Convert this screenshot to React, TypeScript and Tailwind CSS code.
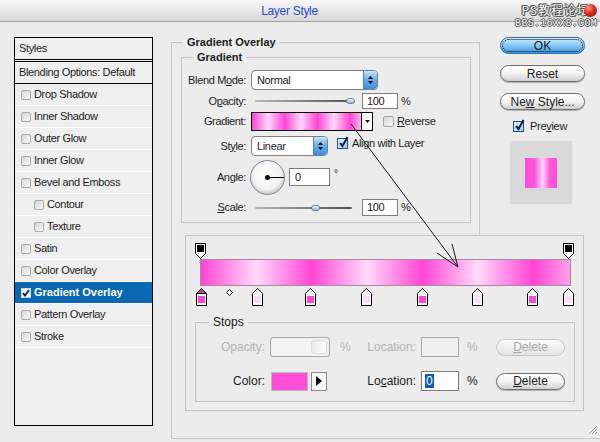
import React from "react";

function U({ children }: { children: React.ReactNode }) {
  return <span className="underline underline-offset-[1px] decoration-1">{children}</span>;
}

function GreyBox() {
  return (
    <span className="block w-[10px] h-[10px] shrink-0 rounded-[2px] border border-[#a9a9a9] bg-linear-to-br from-[#d6d6d6] to-[#fafafa]" />
  );
}

function BlueCheck() {
  return (
    <span className="relative block w-[11px] h-[11px] shrink-0 border border-[#1f4f8a] bg-linear-to-br from-[#e6f2fc] to-[#a8cbea]">
      <svg className="absolute left-[0px] top-[-3px]" width="11" height="13" viewBox="0 0 11 13">
        <path d="M2 7 L4.5 10 L9.5 1" stroke="#0d1f4d" strokeWidth="2" fill="none" />
      </svg>
    </span>
  );
}

function Spinner() {
  return (
    <span className="ml-auto w-[14px] h-[18px] rounded-r-[3px] border-l border-[#4d82c2] bg-linear-to-b from-[#c9e5fc] via-[#62acef] to-[#3a8ee3] flex flex-col items-center justify-center gap-[2px]">
      <svg width="5" height="3" viewBox="0 0 5 3">
        <path d="M0 3 L2.5 0 L5 3 Z" fill="#000" />
      </svg>
      <svg width="5" height="3" viewBox="0 0 5 3">
        <path d="M0 0 L2.5 3 L5 0 Z" fill="#000" />
      </svg>
    </span>
  );
}

const styleItems: { label: string; indent?: boolean; selected?: boolean }[] = [
  { label: "Drop Shadow" },
  { label: "Inner Shadow" },
  { label: "Outer Glow" },
  { label: "Inner Glow" },
  { label: "Bevel and Emboss" },
  { label: "Contour", indent: true },
  { label: "Texture", indent: true },
  { label: "Satin" },
  { label: "Color Overlay" },
  { label: "Gradient Overlay", selected: true },
  { label: "Pattern Overlay" },
  { label: "Stroke" },
];

function ColorStop({ pos, color, selected }: { pos: string; color: string; selected?: boolean }) {
  return (
    <svg className={`absolute top-[2px] ${pos}`} width="11" height="18" viewBox="0 0 11 18">
      <path d="M5.5 0.5 L10.5 5.5 L10.5 17.5 L0.5 17.5 L0.5 5.5 Z" fill="#fff" stroke="#000" strokeWidth="1" />
      {selected && <path d="M5.5 0.5 L10.5 5.5 L0.5 5.5 Z" fill="#c83aa8" stroke="#000" strokeWidth="1" />}
      <rect x="2.5" y="8.5" width="6" height="6" fill={color} stroke={color} strokeWidth="1" />
    </svg>
  );
}

function OpacityStop({ pos }: { pos: string }) {
  return (
    <svg className={`absolute top-0 ${pos}`} width="11" height="16" viewBox="0 0 11 16">
      <path d="M0.5 0.5 L10.5 0.5 L10.5 10.5 L5.5 15.5 L0.5 10.5 Z" fill="#fff" stroke="#000" strokeWidth="1" />
      <rect x="2" y="2" width="7" height="7" fill="#000" />
    </svg>
  );
}

export default function App() {
  return (
    <div className="relative w-[600px] h-[442px] overflow-hidden bg-[#ececec] font-['Liberation_Sans',Arial,sans-serif] text-[11px] text-[#1c1c1c]">
      {/* Title bar */}
      <div className="h-[22px] border-b border-[#a3a3a3] bg-linear-to-b from-[#f8f8f8] to-[#d8d8d8] flex items-center justify-center pr-[21px]">
        <span className="text-[12px] tracking-[-0.3px] text-[#2b49cf]">Layer Style</span>
      </div>

      {/* Body */}
      <div className="flex pl-[14px]">
        {/* Styles list */}
        <div className="mt-[15px] w-[139px] h-[389px] border border-black bg-[#efefef] tracking-[-0.35px]">
          <div className="h-[24px] border-b-[3px] border-double border-black flex items-center pl-[4px]">Styles</div>
          <div className="h-[22px] border-b border-black flex items-center pl-[4px]">Blending Options: Default</div>
          {styleItems.map((it) => (
            <div
              key={it.label}
              className={`h-[22px] border-b border-white flex items-center gap-[3px] ${it.indent ? "pl-[19px]" : "pl-[6px]"} ${
                it.selected ? "bg-[#0b69b3] text-white font-bold tracking-[0px]" : ""
              }`}
            >
              {it.selected ? (
                <span className="relative block w-[10px] h-[10px] shrink-0 bg-white border border-[#c9d9ea]">
                  <svg className="absolute left-0 top-0" width="8" height="8" viewBox="0 0 8 8">
                    <path d="M1 4 L3 6.5 L7 1" stroke="#0a2a66" strokeWidth="2" fill="none" />
                  </svg>
                </span>
              ) : (
                <GreyBox />
              )}
              <span>{it.label}</span>
            </div>
          ))}
        </div>

        {/* Right part */}
        <div className="ml-[18px] mt-[13px] flex-1 flex flex-col">
          {/* Row A */}
          <div className="flex h-[200px]">
            <fieldset className="w-[309px] h-[200px] border border-b-0 border-[#c4c4c4] pl-[9px]">
              <legend className="ml-[2px] px-[4px] leading-[14px] font-bold">Gradient Overlay</legend>
              <fieldset className="mt-[1px] w-[290px] h-[173px] border border-[#c4c4c4] tracking-[-0.35px]">
                <legend className="ml-[11px] px-[4px] leading-[14px] font-bold tracking-[0px]">Gradient</legend>
                <div className="flex flex-col pt-[6px]">
                  {/* Blend mode */}
                  <div className="h-[20px] flex items-center">
                    <span className="w-[64px] text-right">
                      Blend M<U>o</U>de:
                    </span>
                    <div className="ml-[5px] w-[127px] h-[20px] rounded-[4px] border border-[#808080] bg-white flex items-center overflow-hidden">
                      <span className="pl-[5px]">Normal</span>
                      <Spinner />
                    </div>
                  </div>
                  {/* Opacity */}
                  <div className="h-[22px] flex items-center">
                    <span className="w-[64px] text-right">
                      O<U>p</U>acity:
                    </span>
                    <div className="relative ml-[9px] w-[100px] h-[8px] flex items-center">
                      <div className="w-full h-[2px] rounded-full bg-linear-to-r from-[#b8b8b8] to-[#505050]" />
                      <div className="absolute left-[91px] top-[1px] w-[9px] h-[6px] rounded-full border border-[#6d86a3] bg-linear-to-b from-[#eef5fc] to-[#97b4d3]" />
                    </div>
                    <div className="ml-[7px] w-[36px] h-[16px] border border-[#7d7d7d] bg-white pl-[4px] leading-[14px]">100</div>
                    <span className="ml-[3px]">%</span>
                  </div>
                  {/* Gradient */}
                  <div className="h-[19px] flex items-center">
                    <span className="w-[64px] text-right">Gradient:</span>
                    <div className="ml-[5px] w-[111px] h-[19px] border border-black bg-[linear-gradient(to_right,#ff45d6_0%,#ffd6fb_15%,#ff45d6_30%,#ffd6fb_45%,#ff45d6_60%,#ffd6fb_75%,#ff45d6_90%,#ffb5ee_100%)]" />
                    <div className="w-[11px] h-[19px] border border-l-0 border-black bg-white flex items-center justify-center">
                      <svg width="5" height="3" viewBox="0 0 5 3">
                        <path d="M0 0 L2.5 3 L5 0 Z" fill="#000" />
                      </svg>
                    </div>
                    <span className="ml-[10px] block w-[11px] h-[11px] rounded-[2px] border border-[#a3a3a3] bg-linear-to-br from-[#d6d6d6] to-[#fafafa]" />
                    <span className="ml-[3px]">
                      <U>R</U>everse
                    </span>
                  </div>
                  {/* Style */}
                  <div className="h-[30px] flex items-center">
                    <span className="w-[64px] text-right">
                      St<U>y</U>le:
                    </span>
                    <div className="ml-[5px] w-[77px] h-[20px] rounded-[4px] border border-[#808080] bg-white flex items-center overflow-hidden">
                      <span className="pl-[5px]">Linear</span>
                      <Spinner />
                    </div>
                    <div className="ml-[9px] -mt-[6px] flex items-center">
                      <BlueCheck />
                      <span className="ml-[4px]">
                        Ali<U>g</U>n with Layer
                      </span>
                    </div>
                  </div>
                  {/* Angle */}
                  <div className="h-[32px] flex items-center">
                    <span className="w-[64px] text-right">
                      An<U>g</U>le:
                    </span>
                    <div className="relative ml-[4px] w-[35px] h-[35px] rounded-full border border-[#7c8898] bg-[radial-gradient(circle_at_45%_40%,#ffffff_0%,#f2f2f2_55%,#cfcfcf_100%)] shadow-[inset_0_-2px_3px_rgba(0,0,0,0.12)]">
                      <div className="absolute left-[16px] top-[16px] w-[17px] h-[1px] bg-black" />
                      <div className="absolute left-[14px] top-[14px] w-[5px] h-[5px] rounded-full bg-black" />
                    </div>
                    <div className="ml-[4px] w-[41px] h-[18px] border border-[#7d7d7d] bg-white pl-[5px] leading-[16px]">0</div>
                    <span className="ml-[4px] -mt-[8px] text-[10px]">°</span>
                  </div>
                  {/* Scale */}
                  <div className="h-[29px] flex items-center">
                    <span className="w-[64px] text-right">
                      <U>S</U>cale:
                    </span>
                    <div className="relative ml-[9px] w-[97px] h-[8px] flex items-center">
                      <div className="w-full h-[2px] rounded-full bg-linear-to-r from-[#b8b8b8] to-[#505050]" />
                      <div className="absolute left-[56px] top-[1px] w-[9px] h-[6px] rounded-full border border-[#6d86a3] bg-linear-to-b from-[#eef5fc] to-[#97b4d3]" />
                    </div>
                    <div className="ml-[10px] w-[36px] h-[17px] border border-[#7d7d7d] bg-white pl-[4px] leading-[15px]">100</div>
                    <span className="ml-[3px]">%</span>
                  </div>
                </div>
              </fieldset>
            </fieldset>

            {/* Buttons column */}
            <div className="ml-[20px] mt-[2px] w-[85px] flex flex-col text-[12px]">
              <div className="h-[17px] rounded-full border border-[#2f6aa6] bg-linear-to-b from-[#d3ecfd] via-[#86c8f6] to-[#3b98e4] flex items-center justify-center outline-1 outline-dotted outline-black outline-offset-[-3px]">
                OK
              </div>
              <div className="mt-[11px] h-[17px] rounded-full border border-[#6e6e6e] bg-linear-to-b from-white via-[#f4f4f4] to-[#cfcfcf] shadow-[0_1px_1px_rgba(0,0,0,0.25)] flex items-center justify-center">
                Reset
              </div>
              <div className="mt-[11px] h-[17px] rounded-full border border-[#6e6e6e] bg-linear-to-b from-white via-[#f4f4f4] to-[#cfcfcf] shadow-[0_1px_1px_rgba(0,0,0,0.25)] flex items-center justify-center">
                Ne<U>w</U>&nbsp;Style...
              </div>
              <div className="mt-[10px] h-[12px] flex items-center text-[11px] tracking-[-0.3px]">
                <span className="ml-[13px]">
                  <BlueCheck />
                </span>
                <span className="ml-[6px]">
                  Pre<U>v</U>iew
                </span>
              </div>
              <div className="ml-[9px] mt-[8px] w-[64px] h-[65px] bg-[#d9d9d9] border border-[#e8e8e8] flex items-center justify-center">
                <div className="w-[32px] h-[30px] bg-[linear-gradient(to_right,#ff4bd7_0%,#ff56d9_30%,#ffd3fa_55%,#ff56d9_78%,#ff4bd7_100%)]" />
              </div>
            </div>
          </div>

          {/* Row B: gradient editor */}
          <div className="h-[204px] border-l border-b border-[#c4c4c4] flex">
            <div className="ml-[13px] w-[399px] h-[176px] border border-[#c3c3c3] flex flex-col pt-[7px]">
              <div className="relative ml-[14px] w-[370px] h-[16px]">
                <OpacityStop pos="left-[-5px]" />
                <OpacityStop pos="left-[363px]" />
              </div>
              <div className="ml-[14px] w-[371px] h-[27px] border border-[#a08ca0] bg-[linear-gradient(to_right,#ff45d6_0%,#ffd9fb_15%,#ff45d6_30%,#ffd9fb_45%,#ff45d6_60%,#ffd9fb_75%,#ff45d6_90%,#ff9fe9_100%)]" />
              <div className="relative ml-[14px] w-[370px] h-[19px]">
                <ColorStop pos="left-[-4px]" color="#ff45d6" selected />
                <svg className="absolute left-[26px] top-[3px]" width="7" height="7" viewBox="0 0 7 7">
                  <path d="M3.5 0.5 L6.5 3.5 L3.5 6.5 L0.5 3.5 Z" fill="#fff" stroke="#000" strokeWidth="1" />
                </svg>
                <ColorStop pos="left-[52px]" color="#ffd9fb" />
                <ColorStop pos="left-[105px]" color="#ff45d6" />
                <ColorStop pos="left-[161px]" color="#ffd9fb" />
                <ColorStop pos="left-[217px]" color="#ff45d6" />
                <ColorStop pos="left-[272px]" color="#ffd9fb" />
                <ColorStop pos="left-[327px]" color="#ff45d6" />
                <ColorStop pos="left-[363px]" color="#ffd9fb" />
              </div>
              <fieldset className="ml-[9px] mt-[10px] w-[380px] h-[87px] border border-[#c3c3c3] text-[12px]">
                <legend className="ml-[13px] px-[4px] leading-[14px]">Stops</legend>
                {/* Opacity row */}
                <div className="mt-[8px] h-[20px] flex items-center text-[#b3b3b3]">
                  <div className="w-[171px] flex items-center">
                    <span className="w-[69px] text-right">Opacity:</span>
                    <div className="ml-[5px] w-[60px] h-[20px] rounded-[3px] border border-[#a9a9a9] bg-[#f3f3f3] flex justify-end p-[2px]">
                      <div className="w-[16px] h-full rounded-[3px] bg-linear-to-r from-[#e9e9e9] to-white border border-[#dddddd]" />
                    </div>
                    <span className="ml-[10px]">%</span>
                  </div>
                  <span className="w-[49px] text-right">Location:</span>
                  <div className="ml-[5px] w-[38px] h-[20px] border border-[#a9a9a9] bg-[#efefef]" />
                  <span className="w-[37px] pl-[8px]">%</span>
                  <div className="w-[69px] h-[17px] rounded-full border border-[#c4c4c4] bg-linear-to-b from-[#fafafa] to-[#e3e3e3] flex items-center justify-center text-[#a9a9a9]">
                    <U>D</U>elete
                  </div>
                </div>
                {/* Color row */}
                <div className="mt-[14px] h-[20px] flex items-center">
                  <div className="w-[171px] flex items-center">
                    <span className="w-[69px] text-right">Color:</span>
                    <div className="ml-[6px] w-[37px] h-[19px] bg-[#ff4ed8] border border-[#b9b9b9]" />
                    <div className="ml-[3px] w-[16px] h-[19px] border border-[#8a8a8a] bg-[#f7f7f7] flex items-center justify-center">
                      <svg width="6" height="10" viewBox="0 0 6 10">
                        <path d="M0 0 L6 5 L0 10 Z" fill="#000" />
                      </svg>
                    </div>
                  </div>
                  <span className="w-[49px] text-right">
                    Lo<U>c</U>ation:
                  </span>
                  <div className="ml-[5px] w-[38px] h-[20px] border border-[#7d7d7d] bg-white flex items-center pl-[3px]">
                    <span className="bg-[#0a5fb3] text-white px-[1px] leading-[14px]">0</span>
                  </div>
                  <span className="w-[37px] pl-[8px]">%</span>
                  <div className="w-[69px] h-[17px] rounded-full border border-[#6e6e6e] bg-linear-to-b from-white via-[#f4f4f4] to-[#cfcfcf] shadow-[0_1px_1px_rgba(0,0,0,0.25)] flex items-center justify-center">
                    <U>D</U>elete
                  </div>
                </div>
              </fieldset>
            </div>
            <div className="ml-auto mr-[2px] mb-[3px] self-end">
              <svg width="10" height="10" viewBox="0 0 10 10">
                <path d="M9 1 L1 9 M9 4 L4 9 M9 7 L7 9" stroke="#9a9a9a" strokeWidth="1" />
              </svg>
            </div>
          </div>
        </div>
      </div>

      {/* Watermark */}
      <div className="absolute right-[3px] top-[3px] flex flex-col items-end text-[#fafafa]">
        <div className="h-[14px] flex items-center">
          <span className="font-['Noto_Sans_CJK_SC',sans-serif] text-[12px] leading-[14px] tracking-[1px] [text-shadow:1px_0_#555,-1px_0_#555,0_1px_#555,0_-1px_#555,1px_1px_#555,-1px_-1px_#555]">
            PS教程论坛
          </span>
          <span className="-ml-[6px] block w-[13px] h-[13px] rounded-full bg-[radial-gradient(circle_at_35%_30%,#ff9a8a_0%,#e02a1a_45%,#8a0a00_100%)]" />
        </div>
        <span className="mt-[2px] font-['Liberation_Mono',monospace] text-[10px] leading-[10px] tracking-[0.3px] [text-shadow:1px_0_#555,-1px_0_#555,0_1px_#555,0_-1px_#555]">
          BBS.16XX8.COM
        </span>
      </div>

      {/* Annotation arrow */}
      <svg className="absolute left-0 top-0 pointer-events-none" width="600" height="442" viewBox="0 0 600 442">
        <path d="M351 124 L458 267 M458 267 L437 253 M458 267 L452 244" stroke="#1a1a1a" strokeWidth="1" fill="none" />
      </svg>
    </div>
  );
}
